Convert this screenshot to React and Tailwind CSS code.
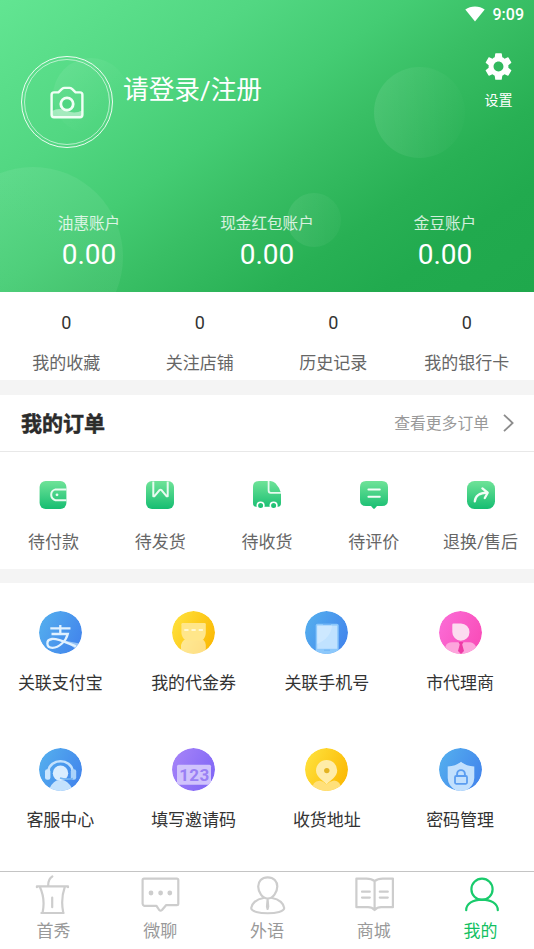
import React from "react";
import { MdSettings } from "react-icons/md";

const accounts = [
  { label: "油惠账户", value: "0.00" },
  { label: "现金红包账户", value: "0.00" },
  { label: "金豆账户", value: "0.00" },
];

const stats = ["我的收藏", "关注店铺", "历史记录", "我的银行卡"];

function Gradients() {
  const list = [
    ["gBlue", "#54aeee", "#4285ec"],
    ["gYellow", "#ffe13c", "#fbb904"],
    ["gPink", "#fb6cd6", "#f94cb8"],
    ["gPurple", "#a583f8", "#8066f6"],
  ];
  return (
    <svg className="absolute size-0" aria-hidden="true">
      <defs>
        {list.map(([id, a, b]) => (
          <linearGradient key={id} id={id} x1="0" y1="0.2" x2="1" y2="0.7">
            <stop offset="0" stopColor={a} />
            <stop offset="1" stopColor={b} />
          </linearGradient>
        ))}
        <linearGradient id="gGreen" x1="0" y1="0" x2="0" y2="28" gradientUnits="userSpaceOnUse">
          <stop offset="0" stopColor="#6fe398" />
          <stop offset="1" stopColor="#16bd71" />
        </linearGradient>
        <clipPath id="disc">
          <circle cx="21.5" cy="21.5" r="21.5" />
        </clipPath>
      </defs>
    </svg>
  );
}

function Disc({ fill, children }) {
  return (
    <svg viewBox="0 0 43 43" className="size-[43px]" fill="none">
      <g clipPath="url(#disc)">
        <circle cx="21.5" cy="21.5" r="21.5" fill={fill} />
        {children}
      </g>
    </svg>
  );
}

const services = [
  {
    label: "关联支付宝",
    icon: (
      <Disc fill="url(#gBlue)">
        <path d="M25 29.5 L43 33 L38 39 Z" fill="#b9dcfb" opacity="0.7" />
        <path
          d="M21.3 14 V22.5 M11.3 17.3 H31.5 M12.5 23 H28.8 C27 30 20 36.8 13.5 36.8 C7 36.8 6.5 28.8 13 28 C19 27.4 27 31.5 37 35.5"
          stroke="#e0f1ff"
          strokeWidth="2.3"
        />
      </Disc>
    ),
  },
  {
    label: "我的代金券",
    icon: (
      <Disc fill="url(#gYellow)">
        <path d="M12 29 H31.5 Q33.8 31 33.8 34 V43 H9 V34 Q9.5 31 12 29 Z" fill="#fff" opacity="0.5" />
        <path d="M10.5 12 H32.5 Q33.8 12 33.8 13.3 V22 Q33.5 27 30 29.6 H14 Q9.8 27 9.4 22 V13.3 Q9.4 12 10.5 12 Z" fill="#ffe68a" />
        <path d="M12.3 19 H31" stroke="#fff8d2" strokeWidth="2" strokeDasharray="4.2 3" />
      </Disc>
    ),
  },
  {
    label: "关联手机号",
    icon: (
      <Disc fill="url(#gBlue)">
        <rect x="10.7" y="12.7" width="23" height="33" rx="1.8" fill="#8cc8fb" />
        <rect x="12.2" y="14.6" width="20" height="23.2" fill="#c0e2ff" />
        <path d="M12.2 14.6 H27 Q26 27 12.2 33 Z" fill="#d5ecff" opacity="0.6" />
        <path d="M18 13.4 H26 M19 39.2 H25" stroke="#6fb4f6" strokeWidth="1" />
      </Disc>
    ),
  },
  {
    label: "市代理商",
    icon: (
      <Disc fill="url(#gPink)">
        <path d="M6.5 43 V35.5 Q8 31.3 13 31.3 H31 Q35.5 31.8 37 36 V43 Z" fill="#fda5dc" />
        <path d="M19.5 31 H24.5 L23.2 33.5 L25 40 L22 43 L19 40 L20.7 33.5 Z" fill="#ee3ba6" />
        <path d="M14.5 12.5 H22 A8.6 8.6 0 1 1 13.3 21 V13.7 Q13.3 12.5 14.5 12.5 Z" fill="#fcdcf0" />
      </Disc>
    ),
  },
  {
    label: "客服中心",
    icon: (
      <Disc fill="url(#gBlue)">
        <path d="M9.5 43 Q12 35.5 17.5 32.5 H25.5 Q31.5 35.5 34 43 Z" fill="#c4e2fd" />
        <circle cx="21.5" cy="25.3" r="7.7" fill="#daedff" />
        <path d="M9.5 23 C10.5 10 32.5 10 33.5 23" stroke="#c3e1fd" strokeWidth="2.6" />
        <rect x="6" y="21.3" width="5.4" height="10.5" rx="2.2" fill="#c9e5fe" />
        <rect x="31.8" y="21.3" width="5.4" height="10.5" rx="2.2" fill="#a9d2fb" />
        <path d="M21 30 Q27 32 34 30.5" stroke="#75b5f2" strokeWidth="1.6" />
      </Disc>
    ),
  },
  {
    label: "填写邀请码",
    icon: (
      <Disc fill="url(#gPurple)">
        <rect x="5" y="16.7" width="34" height="20" rx="1.5" fill="#d0c3fc" />
        <text x="22.4" y="33" textAnchor="middle" fontSize="17" fontWeight="700" letterSpacing="0.4" fontFamily="Roboto, sans-serif" fill="#9a80f4">
          123
        </text>
      </Disc>
    ),
  },
  {
    label: "收货地址",
    icon: (
      <Disc fill="url(#gYellow)">
        <path d="M7 43 Q7 32.5 15 32.8 Q18 33 21.5 36.5 Q25 33 29 32.6 Q35.5 32.5 37 43 Z" fill="#ffe07a" />
        <path d="M21.6 12 A10.6 10.6 0 0 1 32.2 22.6 C32.2 29 25.5 32 21.6 36.5 C17.7 32 11 29 11 22.6 A10.6 10.6 0 0 1 21.6 12 Z" fill="#ffeca8" />
        <circle cx="21.8" cy="22.6" r="2.7" fill="#e3b321" />
      </Disc>
    ),
  },
  {
    label: "密码管理",
    icon: (
      <Disc fill="url(#gBlue)">
        <path d="M22 13.7 Q27 18 35.3 18.6 V30 Q35 40 22 45 Q9 40 8.7 30 V18.6 Q17 18 22 13.7 Z" fill="#c2e0fd" />
        <rect x="16" y="28" width="12" height="7.8" rx="1.2" stroke="#5b9df0" strokeWidth="1.8" />
        <path d="M18.1 28 V26 A3.9 3.9 0 0 1 25.9 26 V28" stroke="#5b9df0" strokeWidth="1.9" />
      </Disc>
    ),
  },
];

function Small({ children }) {
  return (
    <svg viewBox="0 0 28 28" className="size-7" fill="none" strokeLinecap="round" strokeLinejoin="round">
      {children}
    </svg>
  );
}

const orders = [
  {
    label: "待付款",
    icon: (
      <Small>
        <rect x="0.6" width="26.8" height="28" rx="6" fill="url(#gGreen)" />
        <path d="M27.4 8.4 H16.5 Q12.2 9.5 12.2 13.8 Q12.2 18 16.5 19.2 H27.4" stroke="#e8fbf0" strokeWidth="2" strokeLinecap="butt" />
        <circle cx="18" cy="13.8" r="1.4" fill="#e8fbf0" />
      </Small>
    ),
  },
  {
    label: "待发货",
    icon: (
      <Small>
        <rect width="28" height="28" rx="6" fill="url(#gGreen)" />
        <path d="M7.3 0.5 V15.3 L8.3 15.3 L13.3 9.3 Q14.5 8.2 15.7 9.3 L20.7 15.3 H21.7 V0.5" stroke="#e8fbf0" strokeWidth="2" strokeLinecap="butt" />
      </Small>
    ),
  },
  {
    label: "待收货",
    icon: (
      <Small>
        <path d="M6 0 H17.5 Q20.5 0.2 22.5 2.3 Q26.5 6.5 28 12 V22 Q28 25.8 25 25.8 H3 Q0 25.8 0 22 V6 Q0 0 6 0 Z" fill="url(#gGreen)" />
        <path d="M15.6 0 V9.5 Q15.6 11.8 17.8 11.8 H28" stroke="#e8fbf0" strokeWidth="1.8" strokeLinecap="butt" />
        <circle cx="7.6" cy="24.6" r="3.3" fill="url(#gGreen)" stroke="#fff" strokeWidth="1.6" />
        <circle cx="20.6" cy="24.6" r="3.3" fill="url(#gGreen)" stroke="#fff" strokeWidth="1.6" />
      </Small>
    ),
  },
  {
    label: "待评价",
    icon: (
      <Small>
        <path d="M6 0 H22 Q28 0 28 6 V19 Q28 25 22 25 H17 L14.8 27.4 Q14 28.2 13.2 27.4 L11 25 H6 Q0 25 0 19 V6 Q0 0 6 0 Z" fill="url(#gGreen)" />
        <path d="M8.4 8.6 H19.8 M8.4 15.8 H19.8" stroke="#f2fdf7" strokeWidth="2" />
      </Small>
    ),
  },
  {
    label: "退换/售后",
    icon: (
      <Small>
        <rect width="28" height="28" rx="7.5" fill="url(#gGreen)" />
        <path d="M7.8 20.3 Q8.5 12.2 20 11.7 M15.4 7.4 L20.7 11.7 L17.8 17" stroke="#f2fdf7" strokeWidth="2.3" />
      </Small>
    ),
  },
];

function TabIcon({ children }) {
  return (
    <svg viewBox="0 0 40 40" className="size-10" fill="none" stroke="currentColor" strokeWidth="2.2" strokeLinecap="round" strokeLinejoin="round">
      {children}
    </svg>
  );
}

const tabs = [
  {
    label: "首秀",
    icon: (
      <TabIcon>
        <path d="M3.9 12.2 V11.3 H35 V12.2 M19.3 1.5 Q15 4 15.2 11 M6.8 11.8 Q12.5 24 9.6 37.5 M31.8 11.8 Q27.5 24 30.2 37.5 M8.4 38 H30.6 M19.2 22.5 V32.2" />
      </TabIcon>
    ),
  },
  {
    label: "微聊",
    icon: (
      <TabIcon>
        <path d="M4 3.6 H36.8 Q38.3 3.6 38.3 5 V28.8 Q38.3 30.2 36.8 30.2 H26 L22 35 Q20.6 36.2 19.2 35 L16.5 30.8 H4 Q2.6 30.2 2.6 28.8 V5 Q2.6 3.6 4 3.6 Z" />
        <g fill="currentColor" stroke="none">
          <circle cx="11" cy="18" r="2.4" />
          <circle cx="20.6" cy="18" r="2.4" />
          <circle cx="29.8" cy="18" r="2.4" />
        </g>
      </TabIcon>
    ),
  },
  {
    label: "外语",
    icon: (
      <TabIcon>
        <path d="M20.7 2.3 C26.8 2.3 30.3 6.5 30.3 11.5 C30.3 17 26 23.5 20.7 23.5 C15.4 23.5 11.2 17 11.2 11.5 C11.2 6.5 14.6 2.3 20.7 2.3 Z" />
        <path d="M16.5 23 C9 24 4.5 29 4.2 33 C4 40 37.4 40 37.2 33 C36.9 29 32.5 24 25 23" />
        <path d="M20.6 24.5 L20 31.5 L20.6 34 L21.2 31.5 Z" />
      </TabIcon>
    ),
  },
  {
    label: "商城",
    icon: (
      <TabIcon>
        <path d="M20.6 6.2 Q17.5 3.6 12.5 3.6 H2.4 V32.2 H14 Q18 32.2 20.6 35 Q23.2 32.2 27.2 32.2 H38.9 V3.6 H28.7 Q23.7 3.6 20.6 6.2 V35 M8 16.7 H15.8 M8 22.6 H15.8 M25.8 16.7 H33.8 M25.8 22.6 H33.8" />
      </TabIcon>
    ),
  },
  {
    label: "我的",
    active: true,
    icon: (
      <TabIcon>
        <circle cx="21" cy="14.3" r="10.6" />
        <path d="M5.2 35.2 C5.2 28.5 12 24.6 21 24.6 C30 24.6 36.8 28.5 36.8 35.2" />
      </TabIcon>
    ),
  },
];

function Bubbles() {
  return (
    <div className="absolute inset-0 overflow-hidden">
      <div className="absolute left-[-57px] top-[167px] size-[180px] rounded-full bg-linear-to-b from-white/7 to-white/5" />
      <div className="absolute left-[53px] top-[58px] size-[76px] rounded-full bg-linear-to-br from-white/9 to-white/0 to-70%" />
      <div className="absolute left-[374px] top-[67px] size-[91px] rounded-full bg-linear-to-r from-white/9 to-white/1" />
      <div className="absolute left-[287px] top-[193px] size-[54px] rounded-full bg-linear-to-r from-white/8 to-white/3" />
    </div>
  );
}

export default function App() {
  return (
    <div className="flex h-[949px] w-[534px] flex-col overflow-hidden bg-white font-['Roboto','Noto_Sans_CJK_SC',sans-serif]">
      <Gradients />

      <header className="relative h-[292px] shrink-0 bg-[linear-gradient(145deg,#62e592_0%,#52d782_27%,#44cc73_43%,#39bf65_55%,#28b054_72%,#21aa4e_84%,#1fa84c_100%)] text-white">
        <Bubbles />
        <div className="relative flex h-full flex-col">
          <div className="flex h-7 items-center justify-end gap-2 pr-2.5">
            <svg viewBox="0 0 20 16" className="h-4 w-5" fill="currentColor">
              <path d="M10 15.5 L0.3 3.6 Q4.5 0.4 10 0.4 Q15.5 0.4 19.7 3.6 Z" />
            </svg>
            <span className="pt-px text-base leading-7 font-medium">9:09</span>
          </div>

          <div className="flex items-start pl-[21px]">
            <div className="mt-7 flex size-[92px] items-center justify-center rounded-full border-[1.5px] border-white/90 p-0.5">
              <div className="flex size-full items-center justify-center rounded-full border border-white/60">
                <svg viewBox="0 0 34 33" className="h-[33px] w-[34px]" fill="none">
                  <path d="M2 25 Q9 21 17 25 Q25 28 32 24.5 V31 H2 Z" fill="#fff" opacity="0.45" />
                  <path
                    d="M4 6.4 H8.4 L12 2.9 Q13.2 1.9 14.5 1.9 H19.5 Q20.8 1.9 22 2.9 L25.6 6.4 H30 Q32.4 6.4 32.4 8.8 V28.8 Q32.4 31.2 30 31.2 H4 Q1.6 31.2 1.6 28.8 V8.8 Q1.6 6.4 4 6.4 Z"
                    stroke="#f0fff5"
                    strokeWidth="2.4"
                    strokeLinejoin="round"
                  />
                  <circle cx="17" cy="18" r="6.2" fill="#4fd681" stroke="#f0fff5" strokeWidth="2.8" />
                </svg>
              </div>
            </div>
            <h1 className="mt-[42px] ml-2.5 text-[25.7px] leading-10 font-normal">请登录/注册</h1>
            <div className="mt-[21.5px] mr-[19px] ml-auto flex w-[33px] flex-col items-center">
              <MdSettings className="size-[33px]" />
              <span className="mt-[7.5px] text-sm leading-5 whitespace-nowrap">设置</span>
            </div>
          </div>

          <div className="mt-auto grid grid-cols-3 pb-[19px] text-center">
            {accounts.map((a) => (
              <div key={a.label}>
                <div className="text-[15.6px] leading-6 text-white/80">{a.label}</div>
                <div className="mt-px text-[28px] leading-9">{a.value}</div>
              </div>
            ))}
          </div>
        </div>
      </header>

      <section className="grid h-[88px] shrink-0 grid-cols-4 pt-[19px] text-center">
        {stats.map((s) => (
          <div key={s} className="pr-px">
            <div className="text-lg leading-6 text-[#333]">0</div>
            <div className="mt-4 text-[17px] leading-6 text-[#666]">{s}</div>
          </div>
        ))}
      </section>

      <div className="h-[15px] shrink-0 bg-[#f4f4f4]" />

      <div className="flex h-[57px] shrink-0 items-center justify-between border-b border-[#e8e8e8] pr-5 pl-[21px]">
        <h2 className="pt-px text-[21px] leading-8 font-bold text-[#2b2b2b] [-webkit-text-stroke:0.5px_#2b2b2b]">我的订单</h2>
        <div className="flex items-center gap-3.5 text-[#999]">
          <span className="pt-px text-[15.8px] leading-6">查看更多订单</span>
          <svg viewBox="0 0 11 18" className="h-[18px] w-[11px]" fill="none" stroke="#8c8c8c" strokeWidth="1.8">
            <path d="M1 0.8 L9.6 9 L1 17.2" />
          </svg>
        </div>
      </div>

      <section className="grid h-[117px] shrink-0 grid-cols-5 pt-[29px]">
        {orders.map((o) => (
          <div key={o.label} className="flex flex-col items-center">
            {o.icon}
            <span className="mt-[21px] text-[17px] leading-6 text-[#666]">{o.label}</span>
          </div>
        ))}
      </section>

      <div className="h-3.5 shrink-0 bg-[#f4f4f4]" />

      <section className="grid min-h-0 grow auto-rows-[137px] grid-cols-4 pt-7 pr-px">
        {services.map((s) => (
          <div key={s.label} className="flex flex-col items-center pr-[12.5px]">
            {s.icon}
            <span className="mt-[17px] text-[17px] leading-6 text-[#333]">{s.label}</span>
          </div>
        ))}
      </section>

      <nav className="grid h-[78px] shrink-0 grid-cols-5 border-t border-[#c4c4c4] bg-white pt-[3px]">
        {tabs.map((t) => (
          <div key={t.label} className={t.active ? "flex flex-col items-center text-[#19cb6c]" : "flex flex-col items-center text-[#cdcdcd]"}>
            {t.icon}
            <span className={t.active ? "mt-1 text-[17px] leading-6 text-[#12bf62]" : "mt-1 text-[17px] leading-6 text-[#999]"}>{t.label}</span>
          </div>
        ))}
      </nav>
    </div>
  );
}
